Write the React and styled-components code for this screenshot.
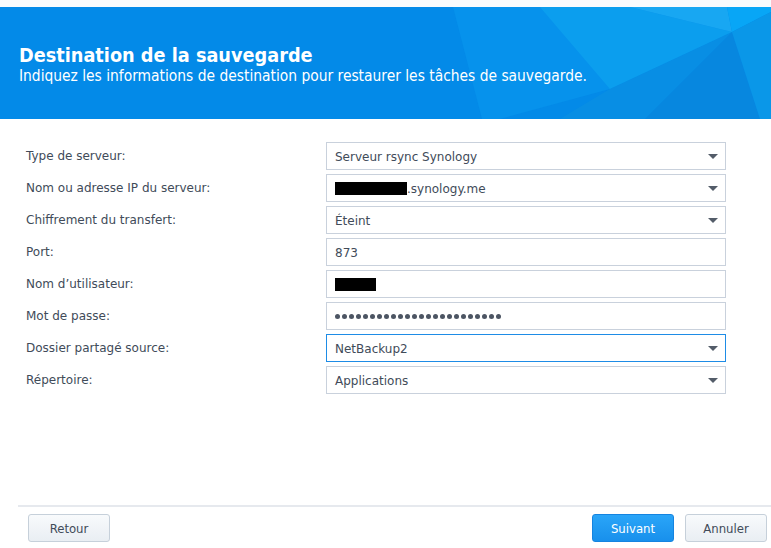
import React from 'react'
import styled, { createGlobalStyle } from 'styled-components'

const GlobalStyle = createGlobalStyle`
  html, body {
    margin: 0;
    padding: 0;
    background: #ffffff;
  }
  body {
    font-family: 'DejaVu Sans', Verdana, sans-serif;
  }
`

const Window = styled.div`
  width: 771px;
  height: 548px;
  display: flex;
  flex-direction: column;
  background: #ffffff;
  overflow: hidden;
`

const TopStrip = styled.div`
  height: 7px;
  background: #f9fbfd;
`

const Header = styled.div`
  position: relative;
  height: 112px;
  background: #038ae8;
  color: #ffffff;
  display: flex;
  flex-direction: column;
  justify-content: center;
  padding: 0 19px;
  overflow: hidden;
`

const HeaderArt = styled.svg`
  position: absolute;
  top: 0;
  left: 0;
  width: 771px;
  height: 112px;
`

const HeaderText = styled.div`
  position: relative;
  font-family: 'DejaVu Sans Condensed', 'DejaVu Sans', sans-serif;
  margin-top: 4px;
`

const Title = styled.h1`
  margin: 0;
  font-size: 19.7px;
  font-weight: bold;
  line-height: 22px;
`

const Subtitle = styled.p`
  margin: 0;
  font-size: 15.4px;
  line-height: 19px;
`

const Body = styled.div`
  flex: 1;
  padding: 23px 45px 0 26px;
  display: flex;
  flex-direction: column;
  gap: 4px;
`

const Row = styled.div`
  display: flex;
  align-items: center;
  height: 28px;
`

const Label = styled.div`
  width: 300px;
  font-size: 12px;
  color: #414b59;
`

const Field = styled.div`
  width: 400px;
  height: 28px;
  box-sizing: border-box;
  border: 1px solid ${p => (p.$focused ? '#1e8ce6' : '#c9d1dc')};
  background: #ffffff;
  display: flex;
  align-items: center;
  padding: 0 7px 0 8px;
  font-size: 12px;
  color: #414b59;
`

const Value = styled.span`
  flex: 1;
  display: flex;
  align-items: center;
  padding-top: 1px;
`

const Redacted = styled.span`
  display: inline-block;
  width: ${p => p.$w}px;
  height: 13px;
  background: #000000;
`

const Dot = styled.span`
  display: inline-block;
  width: 5px;
  height: 5px;
  border-radius: 50%;
  background: #4c5563;
  margin-right: 2px;
`

const Arrow = styled.span`
  width: 0;
  height: 0;
  border-left: 5.5px solid transparent;
  border-right: 5.5px solid transparent;
  border-top: 5px solid #535c69;
`

const Footer = styled.div`
  margin-left: 18px;
  border-top: 2px solid #e6e9ee;
  height: 41px;
  box-sizing: border-box;
  display: flex;
  align-items: center;
  padding: 3px 4px 0 10px;
  gap: 11px;
  margin-bottom: 2px;
`

const Spacer = styled.div`
  flex: 1;
`

const Button = styled.button`
  width: 82px;
  height: 28px;
  border-radius: 3px;
  font-family: 'DejaVu Sans Condensed', 'DejaVu Sans', sans-serif;
  font-size: 13px;
  cursor: pointer;
  border: 1px solid ${p => (p.$primary ? '#1584e0' : '#c6d0da')};
  color: ${p => (p.$primary ? '#ffffff' : '#414b59')};
  background: ${p =>
    p.$primary
      ? 'linear-gradient(#2aa5f8, #1890ec)'
      : 'linear-gradient(#f8fafc, #e9eef3)'};
`

const rows = [
  { label: 'Type de serveur:', value: 'Serveur rsync Synology', select: true },
  { label: 'Nom ou adresse IP du serveur:', value: '.synology.me', select: true, redact: 72 },
  { label: 'Chiffrement du transfert:', value: 'Éteint', select: true },
  { label: 'Port:', value: '873' },
  { label: 'Nom d\u2019utilisateur:', value: '', redact: 41 },
  { label: 'Mot de passe:', password: 24 },
  { label: 'Dossier partagé source:', value: 'NetBackup2', select: true, focused: true },
  { label: 'Répertoire:', value: 'Applications', select: true },
]

export default function App() {
  return (
    <Window>
      <GlobalStyle />
      <TopStrip />
      <Header>
        <HeaderArt viewBox="0 0 771 112" preserveAspectRatio="none">
          <polygon points="453,0 630,0 732,25 610,82 500,112 482,112" fill="#0a9af0" opacity="0.5" />
          <polygon points="540,0 630,0 732,25 610,82" fill="#0fa6f0" opacity="0.6" />
          <polygon points="630,0 727,0 732,25" fill="#1cacf3" opacity="0.85" />
          <polygon points="727,0 771,0 771,5 732,25" fill="#08a6f6" />
          <polygon points="610,82 732,25 645,112 560,112" fill="#0b90e2" opacity="0.7" />
          <polygon points="732,25 760,112 645,112" fill="#0a86dc" opacity="0.7" />
          <polygon points="732,25 771,5 771,112 760,112" fill="#0a97e8" />
        </HeaderArt>
        <HeaderText>
          <Title>Destination de la sauvegarde</Title>
          <Subtitle>Indiquez les informations de destination pour restaurer les tâches de sauvegarde.</Subtitle>
        </HeaderText>
      </Header>
      <Body>
        {rows.map(r => (
          <Row key={r.label}>
            <Label>{r.label}</Label>
            <Field $focused={r.focused}>
              <Value>
                {r.redact && <Redacted $w={r.redact} />}
                {r.password
                  ? Array.from({ length: r.password }, (_, i) => <Dot key={i} />)
                  : r.value}
              </Value>
              {r.select && <Arrow />}
            </Field>
          </Row>
        ))}
      </Body>
      <Footer>
        <Button>Retour</Button>
        <Spacer />
        <Button $primary>Suivant</Button>
        <Button>Annuler</Button>
      </Footer>
    </Window>
  )
}
